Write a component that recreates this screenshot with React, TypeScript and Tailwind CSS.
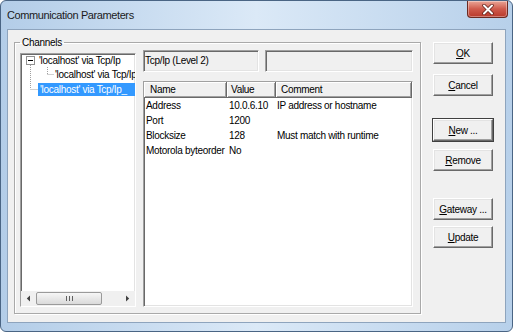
import React from 'react'

const sunken =
  'border border-t-[#a0a0a0] border-l-[#a0a0a0] border-r-white border-b-white shadow-[inset_1px_1px_0_#696969,inset_-1px_-1px_0_#e3e3e3]'

const headerCell =
  'h-[16px] leading-[15px] bg-[#f0f0f0] border-r border-b border-r-[#696969] border-b-[#696969] shadow-[inset_1px_1px_0_#ffffff,inset_-1px_-1px_0_#a0a0a0]'

const params = [
  { name: 'Address', value: '10.0.6.10', comment: 'IP address or hostname' },
  { name: 'Port', value: '1200', comment: '' },
  { name: 'Blocksize', value: '128', comment: 'Must match with runtime' },
  { name: 'Motorola byteorder', value: 'No', comment: '' },
]

function DlgButton({ hot, rest, isDefault, className }: { hot: string; rest: string; isDefault?: boolean; className?: string }) {
  return (
    <div
      className={
        'w-[60px] h-[22px] bg-[#f0f0f0] border border-t-white border-l-white border-r-[#696969] border-b-[#696969] shadow-[inset_-1px_-1px_0_#a0a0a0,inset_1px_1px_0_#e3e3e3] flex items-center justify-center text-black ' +
        (isDefault ? 'outline outline-[#404040] ' : '') +
        (className ?? '')
      }
    >
      <span>
        <span className="underline underline-offset-[1px]">{hot}</span>
        {rest}
      </span>
    </div>
  )
}

function ChannelTree() {
  return (
    <div className={'relative w-[116px] h-[254px] mt-[4px] bg-white ' + sunken}>
      <div className="flex flex-col h-full">
        <div className="relative flex-1 text-black">
          <svg className="absolute left-0 top-0" width="40" height="40" viewBox="0 0 40 40">
            <g stroke="#a0a0a0" strokeWidth="1" strokeDasharray="1 1" fill="none">
              <line x1="9.5" y1="11" x2="9.5" y2="35" />
              <line x1="9.5" y1="35.5" x2="17" y2="35.5" />
              <line x1="26.5" y1="13" x2="26.5" y2="20" />
              <line x1="26.5" y1="20.5" x2="33" y2="20.5" />
            </g>
            <rect x="5.5" y="2.5" width="8" height="8" fill="#fff" stroke="#919191" />
            <line x1="7" y1="6.5" x2="12" y2="6.5" stroke="#000" />
          </svg>
          <div className="h-[14px] leading-[14px] pl-[18px] whitespace-nowrap overflow-hidden">'localhost' via Tcp/Ip</div>
          <div className="h-[14px] leading-[14px] pl-[34px] whitespace-nowrap overflow-hidden">'localhost' via Tcp/Ip</div>
          <div className="h-[14px] flex items-center pl-[17px]">
            <div className="h-[13px] leading-[13px] flex-1 bg-[#3399ff] text-white pl-[2px] whitespace-nowrap overflow-hidden">
              'localhost' via Tcp/Ip_
            </div>
          </div>
        </div>
        <div className="h-[15px] flex items-center bg-[#f0f0f0]">
          <div className="w-[15px] h-full flex items-center justify-center">
            <svg width="5" height="7" viewBox="0 0 5 7"><path d="M4 0.5 L0.8 3.5 L4 6.5 Z" fill="#404040" /></svg>
          </div>
          <div className="w-[66px] h-[13px] rounded-[2px] border border-[#9a9a9a] bg-gradient-to-b from-[#f6f6f6] to-[#dadada] flex items-center justify-center">
            <span className="w-[1px] h-[5px] bg-[#606060]" />
            <span className="w-[1px] h-[5px] bg-[#606060] ml-[2px]" />
            <span className="w-[1px] h-[5px] bg-[#606060] ml-[2px]" />
          </div>
          <div className="flex-1" />
          <div className="w-[15px] h-full flex items-center justify-center">
            <svg width="5" height="7" viewBox="0 0 5 7"><path d="M1 0.5 L4.2 3.5 L1 6.5 Z" fill="#404040" /></svg>
          </div>
        </div>
      </div>
    </div>
  )
}

function ParamPanel() {
  return (
    <div className="w-[270px] h-[257px] mt-[1px] ml-[7px] flex flex-col">
      <div className="flex gap-[6px] h-[22px]">
        <div className={'w-[116px] h-full bg-[#f0f0f0] leading-[20px] pl-[1px] text-black ' + sunken}>Tcp/Ip (Level 2)</div>
        <div className={'flex-1 h-full bg-[#f0f0f0] ' + sunken} />
      </div>
      <div className={'flex-1 mt-[9px] bg-white ' + sunken}>
        <div className="grid grid-cols-[83px_49px_1fr] text-black">
          <div className={headerCell + ' pl-[6px]'}>Name</div>
          <div className={headerCell + ' pl-[4px]'}>Value</div>
          <div className={headerCell + ' pl-[5px]'}>Comment</div>
          {params.map((p) => (
            <React.Fragment key={p.name}>
              <div className="h-[15px] leading-[15px] pl-[2px] whitespace-nowrap">{p.name}</div>
              <div className="h-[15px] leading-[15px] pl-[2px] whitespace-nowrap">{p.value}</div>
              <div className="h-[15px] leading-[15px] pl-[1px] whitespace-nowrap">{p.comment}</div>
            </React.Fragment>
          ))}
        </div>
      </div>
    </div>
  )
}

export default function App() {
  return (
    <div className="w-[513px] h-[332px] flex flex-col rounded-[6px] border border-[#4a6584] bg-gradient-to-r from-[#b3cde8] via-[#dbe9f7] to-[#b7d0ea] font-['Liberation_Sans',Arial,sans-serif] text-[10px] tracking-[-0.3px] overflow-hidden">
      <div className="h-[28px] flex items-start justify-between pl-[6px] pr-[4px]">
        <span className="mt-[6px] text-[11px] tracking-[-0.4px] leading-[16px] text-[#1b1b1b]">Communication Parameters</span>
        <div className="w-[41px] h-[17px] rounded-b-[4px] border border-t-0 border-[#6b2a22] bg-gradient-to-b from-[#e9a597] via-[#cf5a4c] to-[#b8392b] flex items-center justify-center shadow-[inset_0_0_0_1px_rgba(255,255,255,0.35)]">
          <svg width="12" height="11" viewBox="0 0 12 11">
            <path d="M2 1.5 L10 9.5 M10 1.5 L2 9.5" stroke="#5a1a14" strokeWidth="3.4" strokeLinecap="round" />
            <path d="M2 1.5 L10 9.5 M10 1.5 L2 9.5" stroke="#ffffff" strokeWidth="2" strokeLinecap="round" />
          </svg>
        </div>
      </div>
      <div className="flex-1 mx-[6px] mb-[8px] border border-[#8ea4bd] bg-[#f0f0f0] flex items-start pl-[6px] pt-[6px]">
        <fieldset className="w-[407px] h-[278px] border border-[#a9a9a9] shadow-[1px_1px_0_#ffffff,inset_1px_1px_0_#ffffff] px-0">
          <legend className="ml-[5px] px-[2px] leading-[13px] text-black">Channels</legend>
          <div className="flex items-start pl-[5px]">
            <ChannelTree />
            <ParamPanel />
          </div>
        </fieldset>
        <div className="ml-[12px] mt-[6px] flex flex-col">
          <DlgButton hot="O" rest="K" />
          <DlgButton hot="C" rest="ancel" className="mt-[10px]" />
          <DlgButton hot="N" rest="ew ..." isDefault className="mt-[23px]" />
          <DlgButton hot="R" rest="emove" className="mt-[8px]" />
          <DlgButton hot="G" rest="ateway ..." className="mt-[27px]" />
          <DlgButton hot="U" rest="pdate" className="mt-[6px]" />
        </div>
      </div>
    </div>
  )
}
